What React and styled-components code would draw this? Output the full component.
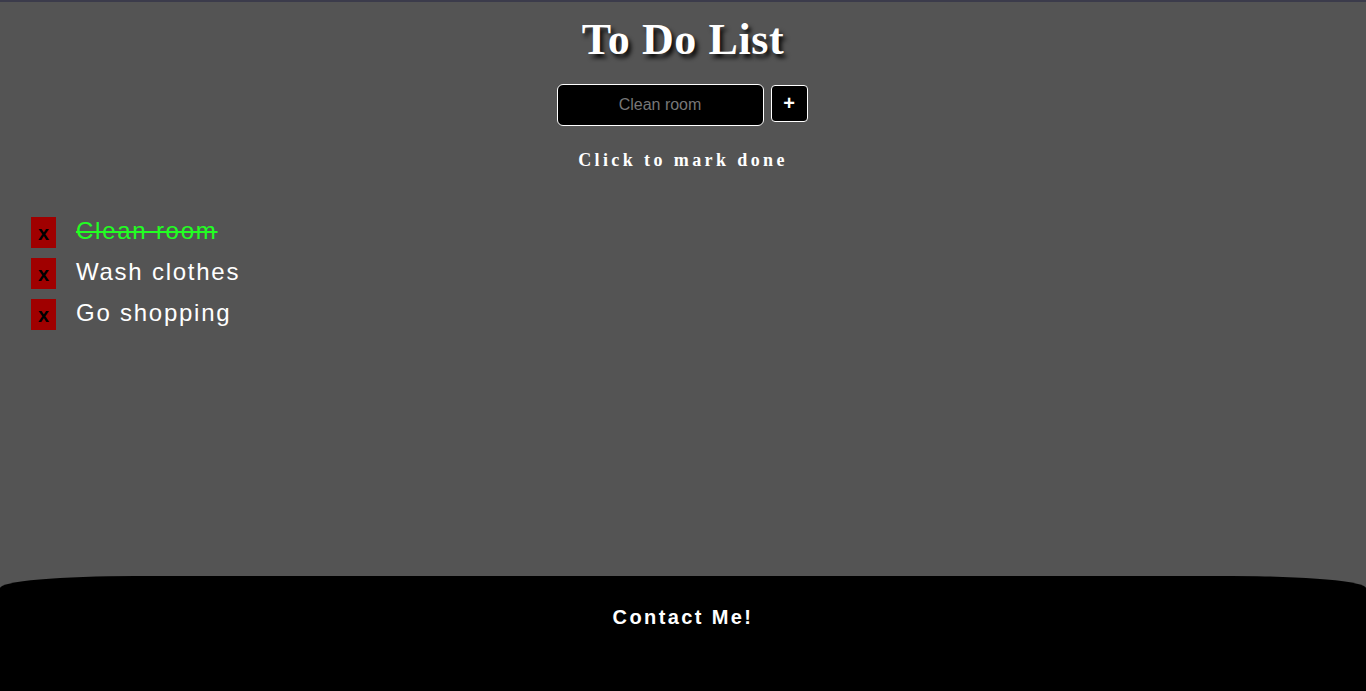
import React, { useState } from "react";
import styled, { createGlobalStyle } from "styled-components";

const GlobalStyle = createGlobalStyle`
  html, body {
    margin: 0;
    padding: 0;
  }
  body {
    background: #545454;
    border-top: 2px solid #3b3b4b;
    font-family: "Liberation Sans", Arial, sans-serif;
  }
`;

const Page = styled.div`
  min-height: calc(100vh - 2px);
  display: flex;
  flex-direction: column;
`;

const Main = styled.main`
  flex: 1;
  display: flex;
  flex-direction: column;
`;

const Title = styled.h1`
  font-family: "Liberation Serif", "Times New Roman", serif;
  font-weight: 700;
  font-size: 44px;
  line-height: 50px;
  letter-spacing: 0.6px;
  color: #fff;
  text-align: center;
  margin: 13px 0 0;
  text-shadow: 3px 4px 4px rgba(0, 0, 0, 0.85);
`;

const Form = styled.form`
  display: flex;
  justify-content: center;
  align-items: flex-start;
  gap: 7px;
  margin-top: 19px;
  padding-right: 2px;
`;

const Input = styled.input`
  width: 207px;
  height: 42px;
  box-sizing: border-box;
  background: #000;
  color: #fff;
  border: 1px solid #fff;
  border-radius: 6px;
  text-align: center;
  font-family: "Liberation Sans", Arial, sans-serif;
  font-size: 16px;
  outline: none;
  &::placeholder {
    color: #777;
  }
`;

const AddBtn = styled.button`
  width: 37px;
  height: 37px;
  margin-top: 1px;
  box-sizing: border-box;
  background: #000;
  color: #fff;
  border: 1px solid #fff;
  border-radius: 4px;
  font-family: "Liberation Sans", Arial, sans-serif;
  font-weight: 700;
  font-size: 20px;
  line-height: 1;
  padding: 0 0 2px;
  cursor: pointer;
`;

const Hint = styled.p`
  font-family: "Liberation Serif", "Times New Roman", serif;
  font-weight: 700;
  font-size: 18px;
  letter-spacing: 3.4px;
  color: #fff;
  text-align: center;
  margin: 24px 0 0;
`;

const List = styled.ul`
  list-style: none;
  margin: 46px 0 0;
  padding: 0 0 0 31px;
  display: flex;
  flex-direction: column;
  gap: 10px;
`;

const Row = styled.li`
  display: flex;
  align-items: center;
  gap: 20px;
  height: 31px;
`;

const DeleteBtn = styled.button`
  width: 25px;
  height: 31px;
  padding: 1px 0 0;
  border: none;
  background: #a00000;
  color: #000;
  font-family: "Liberation Sans", Arial, sans-serif;
  font-weight: 700;
  font-size: 20px;
  line-height: 1;
  cursor: pointer;
  display: flex;
  align-items: center;
  justify-content: center;
`;

const Label = styled.span`
  font-size: 24px;
  letter-spacing: 1.75px;
  padding-bottom: 4px;
  color: ${(p) => (p.$done ? "#22ff22" : "#fff")};
  text-decoration: ${(p) => (p.$done ? "line-through" : "none")};
  text-decoration-thickness: 2px;
  cursor: pointer;
`;

const Footer = styled.footer`
  height: 115px;
  background: #000;
  border-radius: 135px 135px 0 0 / 12px 12px 0 0;
  display: flex;
  justify-content: center;
  padding-top: 30px;
  box-sizing: border-box;
`;

const ContactLink = styled.a`
  color: #fff;
  font-weight: 700;
  font-size: 20px;
  letter-spacing: 2.4px;
  text-decoration: none;
  height: 24px;
`;

const initial = [
  { id: 1, text: "Clean room", done: true },
  { id: 2, text: "Wash clothes", done: false },
  { id: 3, text: "Go shopping", done: false },
];

export default function App() {
  const [todos, setTodos] = useState(initial);
  const [value, setValue] = useState("");

  const add = (e) => {
    e.preventDefault();
    if (!value.trim()) return;
    setTodos([...todos, { id: Date.now(), text: value, done: false }]);
    setValue("");
  };

  return (
    <Page>
      <GlobalStyle />
      <Main>
        <Title>To Do List</Title>
        <Form onSubmit={add}>
          <Input
            placeholder="Clean room"
            value={value}
            onChange={(e) => setValue(e.target.value)}
          />
          <AddBtn type="submit">+</AddBtn>
        </Form>
        <Hint>Click to mark done</Hint>
        <List>
          {todos.map((t) => (
            <Row key={t.id}>
              <DeleteBtn
                type="button"
                onClick={() => setTodos(todos.filter((x) => x.id !== t.id))}
              >
                x
              </DeleteBtn>
              <Label
                $done={t.done}
                onClick={() =>
                  setTodos(
                    todos.map((x) => (x.id === t.id ? { ...x, done: !x.done } : x))
                  )
                }
              >
                {t.text}
              </Label>
            </Row>
          ))}
        </List>
      </Main>
      <Footer>
        <ContactLink href="#">Contact Me!</ContactLink>
      </Footer>
    </Page>
  );
}
